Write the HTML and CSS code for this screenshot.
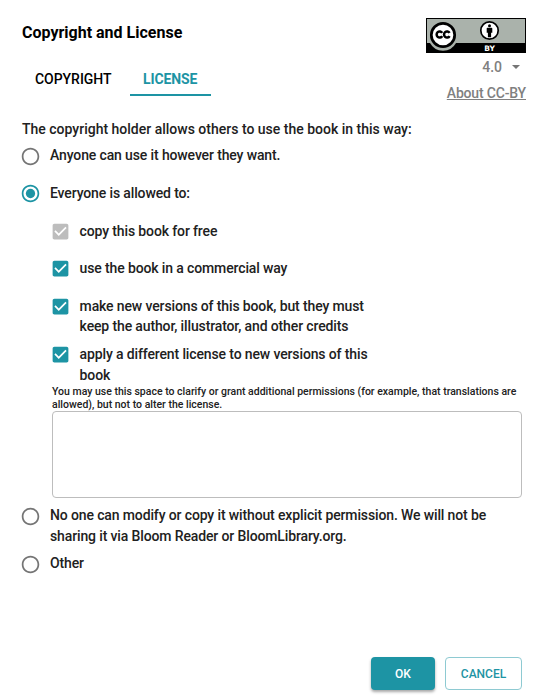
FILE: index.html
```html
<!DOCTYPE html>
<html lang="en">
<head>
<meta charset="utf-8">
<title>Copyright and License</title>
<link rel="stylesheet" href="styles.css">
</head>
<body>
<svg class="defs" width="0" height="0" aria-hidden="true">
  <symbol id="radio-off" viewBox="0 0 24 24"><path d="M12 2C6.48 2 2 6.48 2 12s4.480 10 10 10 10-4.480 10-10S17.520 2 12 2zm0 18c-4.420 0-8-3.580-8-8s3.580-8 8-8 8 3.580 8 8-3.580 8-8 8z"/></symbol>
  <symbol id="radio-on" viewBox="0 0 24 24"><path d="M12 2C6.48 2 2 6.48 2 12s4.480 10 10 10 10-4.480 10-10S17.520 2 12 2zm0 18c-4.420 0-8-3.580-8-8s3.580-8 8-8 8 3.580 8 8-3.580 8-8 8z"/><circle cx="12" cy="12" r="5.300"/></symbol>
  <symbol id="check" viewBox="0 0 24 24"><path d="M19 3H5c-1.110 0-2 .9-2 2v14c0 1.100.89 2 2 2h14c1.110 0 2-.9 2-2V5c0-1.100-.89-2-2-2zm-9 14l-5-5 1.410-1.410L10 14.170l7.590-7.590L19 8l-9 9z"/></symbol>
</svg>
<main class="dialog">
  <header class="header">
    <div class="heading">
      <h1>Copyright and License</h1>
      <nav class="tabs">
        <span class="tab">COPYRIGHT</span>
        <span class="tab active">LICENSE</span>
      </nav>
    </div>
    <aside class="badge">
      <svg class="cc" width="100" height="35" viewBox="0 0 100 35">
        <rect width="100" height="35" fill="#000"/>
        <rect x="1" y="1" width="98" height="24" fill="#aab2ab"/>
        <path d="M4 25a14.800 14.800 0 0 0 26 0z" fill="#aab2ab"/>
        <circle cx="17" cy="17" r="11.700" fill="#fff" stroke="#000" stroke-width="2.700"/>
        <g fill="none" stroke="#000" stroke-width="2.500">
          <path d="M16.200 14.900A3 3.100 0 1 0 16.200 18.100"/>
          <path d="M23.600 14.900A3 3.100 0 1 0 23.600 18.100"/>
        </g>
        <circle cx="63.500" cy="12.500" r="8.700" fill="#fff" stroke="#000" stroke-width="1.700"/>
        <circle cx="63.500" cy="7.700" r="1.500"/>
        <path d="M61.500 9.700h4q.8 0 .8.8v4.200h-1.200v4.500h-3.200v-4.500h-1.200v-4.200q0-.8.8-.8z"/>
        <text class="by" x="63.500" y="33" text-anchor="middle">BY</text>
      </svg>
      <div class="version">4.0<svg class="caret" width="8" height="4" viewBox="0 0 8 4"><path d="M0 0h8L4 4z"/></svg></div>
      <a class="about">About CC-BY</a>
    </aside>
  </header>

  <section class="license">
    <p class="intro">The copyright holder allows others to use the book in this way:</p>
    <div class="option anyone"><svg class="icon"><use href="#radio-off"/></svg><span>Anyone can use it however they want.</span></div>
    <div class="option everyone"><svg class="icon on"><use href="#radio-on"/></svg><span>Everyone is allowed to:</span></div>
    <div class="permissions">
      <div class="option free"><svg class="icon disabled"><use href="#check"/></svg><span>copy this book for free</span></div>
      <div class="option commercial"><svg class="icon on"><use href="#check"/></svg><span>use the book in a commercial way</span></div>
      <div class="option versions"><svg class="icon on"><use href="#check"/></svg><span>make new versions of this book, but they must<br>keep the author, illustrator, and other credits</span></div>
      <div class="option relicense"><svg class="icon on"><use href="#check"/></svg><span>apply a different license to new versions of this<br>book</span></div>
      <p class="help">You may use this space to clarify or grant additional permissions (for example, that translations are<br>allowed), but not to alter the license.</p>
      <textarea class="notes"></textarea>
    </div>
    <div class="option noone"><svg class="icon"><use href="#radio-off"/></svg><span>No one can modify or copy it without explicit permission. We will not be<br>sharing it via Bloom Reader or BloomLibrary.org.</span></div>
    <div class="option other"><svg class="icon"><use href="#radio-off"/></svg><span>Other</span></div>
  </section>

  <footer class="actions">
    <button class="btn ok">OK</button>
    <button class="btn cancel">CANCEL</button>
  </footer>
</main>
</body>
</html>
```
FILE: styles.css
```css
* { box-sizing: border-box; }
body { margin: 0; background: #fff; color: #212121; font: 500 14px/20px Roboto, "Liberation Sans", sans-serif; }
.defs { display: block; height: 0; }
.dialog { width: 542px; height: 698px; padding: 0 20px 8px 22px; display: flex; flex-direction: column; overflow: hidden; }
.header { display: flex; justify-content: space-between; height: 119px; margin-right: -4px; }
h1 { margin: 23px 0 0; font-size: 16px; line-height: 20px; font-weight: 700; color: #000; white-space: nowrap; }
.tabs { display: flex; margin-top: 19px; gap: 6px; }
.tab { height: 34px; line-height: 34px; padding: 0 13px; color: #000; border-bottom: 2px solid transparent; letter-spacing: -.04px; }
.tab.active { width: 81px; margin-left: -.5px; color: #1d94a4; font-weight: 700; border-color: #1d94a4; letter-spacing: -.1px; }
.badge { display: flex; flex-direction: column; align-items: flex-end; padding-top: 18px; color: #808080; }
.cc { display: block; }
.by { font: 700 7.500px "DejaVu Sans", sans-serif; fill: #fff; }
.version { display: flex; align-items: center; gap: 10px; margin: 4px 6px 0 0; line-height: 20px; }
.caret { fill: #757575; }
.about { margin-top: 6px; text-decoration: underline; letter-spacing: -.17px; }
p { margin: 0; white-space: nowrap; }
.option { display: flex; align-items: flex-start; gap: 9px; white-space: nowrap; letter-spacing: -.13px; }
.icon { flex: none; width: 21px; height: 21px; margin-left: -2px; fill: #757575; }
.icon.on { fill: #1d94a4; }
.icon.disabled { fill: #bdbdbd; }
.anyone { margin-top: 7px; }
.anyone span { margin-top: -1px; }
.everyone { margin-top: 16px; }
.permissions { padding-left: 30px; width: 500px; }
.permissions .icon { margin-left: -2px; }
.permissions .option { gap: 8.600px; }
.free { margin-top: 17px; }
.commercial { margin-top: 16px; }
.versions { margin-top: 17px; }
.relicense { margin-top: 8px; line-height: 21px; }
.help { margin-top: -1px; font-size: 10.500px; line-height: 13px; }
.notes { display: block; width: 470px; height: 87px; border: 1px solid #bdbdbd; border-radius: 4px; resize: none; background: #fff; }
.noone { margin-top: 7px; line-height: 21px; }
.other { margin-top: 6px; }
.noone .icon, .other .icon { margin-top: .5px; }
.actions { display: flex; justify-content: flex-end; gap: 10px; margin-top: auto; }
.btn { height: 33px; padding: 1px 0 0; border-radius: 4px; font: 500 12px/31px Roboto, sans-serif; }
.ok { width: 64px; border: 0; background: #1d94a4; color: #fff; box-shadow: 0 2px 3px rgba(0,0,0,.35); }
.cancel { width: 77px; border: 1px solid #8ecad2; background: #fff; color: #1d94a4; }
```
